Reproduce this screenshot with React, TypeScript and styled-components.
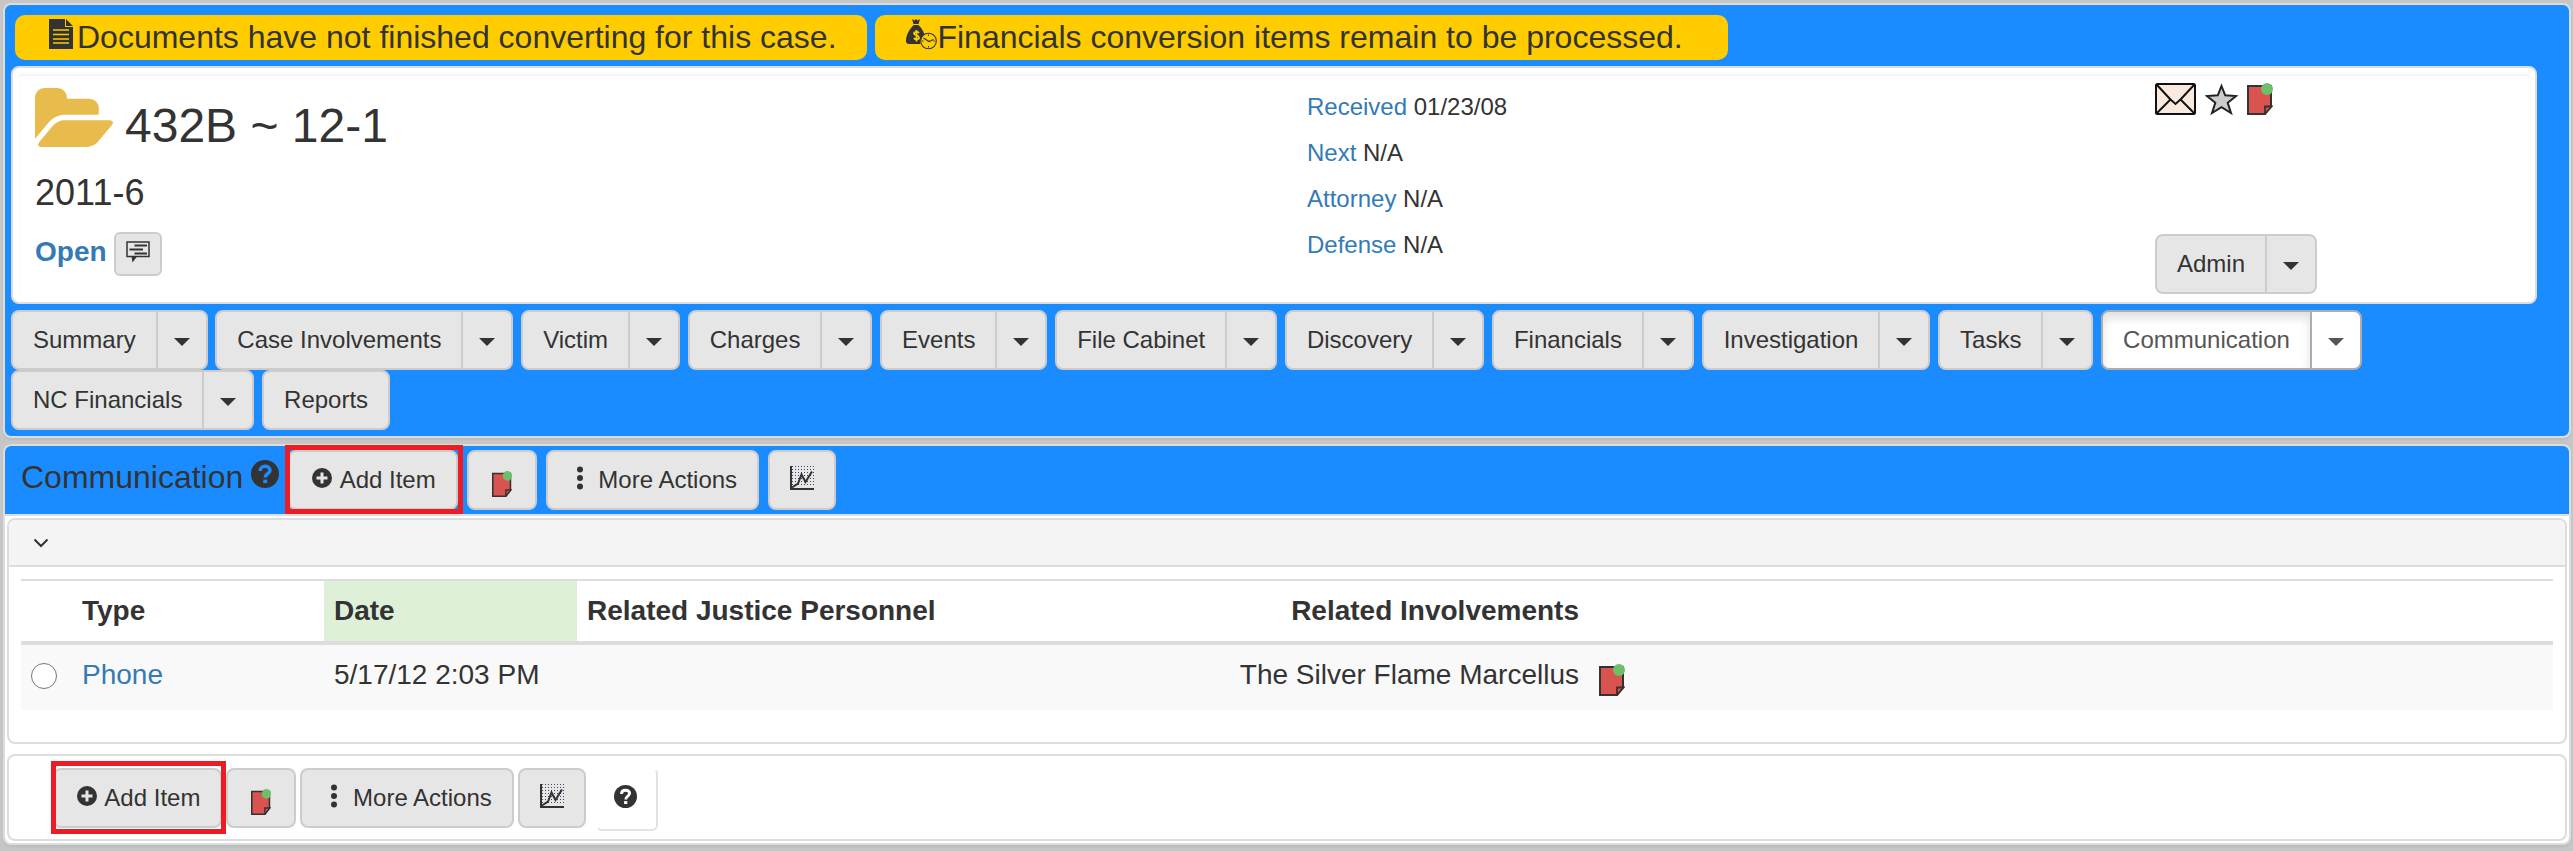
import React from "react";
import styled, { createGlobalStyle, css } from "styled-components";

const GlobalStyle = createGlobalStyle`
  *, *::before, *::after { box-sizing: border-box; }
  body {
    margin: 0;
    background: #c6c6c6;
    color: #333;
    font-family: Arial, "Liberation Sans", sans-serif;
    font-size: 24px;
  }
  button { font: inherit; color: inherit; cursor: pointer; margin: 0; }
  a { color: #337ab7; text-decoration: none; }
  svg { flex: none; }
`;

/* ---------- icons ---------- */

const InlineSvg = styled.svg`
  vertical-align: -2px;
`;

const FileIcon = () => (
  <InlineSvg width="32" height="32" viewBox="0 0 32 32" aria-hidden="true">
    <path fill="#333" d="M4 1h16v8h8v22H4zM21 1l7 7h-7z" />
    <path stroke="#fc0" strokeWidth="1.5" d="M8 12h16M8 16.5h16M8 21h16M8 25h16" />
  </InlineSvg>
);

const MoneyBagIcon = () => (
  <InlineSvg width="32" height="32" viewBox="0 0 32 32" aria-hidden="true">
    <path
      fill="#333"
      d="M7 1l2.500 1.500L11 1l1.500 1.500L15 1l-1.500 5h-5zM8.500 7h5c4 4 6 8 6 11-3 2-5 4-4 8H4c-2 0-3-1-3-3 0-6 3-11 7.500-16z"
    />
    <path
      fill="none"
      stroke="#fc0"
      strokeWidth="1.800"
      d="M14 15c-1-1.500-5-1.500-5 .5s5 1.500 5 4-4 2.500-5 .5M11.500 12v11.500"
    />
    <circle cx="23.500" cy="23" r="7.800" fill="#fc0" stroke="#333" strokeWidth="1.100" />
    <path fill="none" stroke="#333" strokeWidth="1.200" d="M18.500 20l5.500 3.500 4.500-2" />
    <path stroke="#333" strokeWidth="1" d="M23.500 16.500v1.500M23.500 28v1.500M17 23h1.500M28.500 23H30" />
  </InlineSvg>
);

const FolderOpenIcon = () => (
  <svg width="78" height="59" viewBox="64 128 1879 1408" preserveAspectRatio="none" aria-hidden="true">
    <path
      fill="#e8bb4d"
      d="M1943 952q0 31-31 66l-336 396q-43 51-120.500 86.500t-143.500 35.500h-1088q-34 0-60.500-13t-26.500-43q0-31 31-66l336-396q43-51 120.500-86.500t143.500-35.500h1088q34 0 60.500 13t26.500 43zm-343-344v160h-832q-94 0-197 47.500t-164 119.500l-337 396-5 6q0-4-.5-12.500t-.5-12.500v-960q0-92 66-158t158-66h320q92 0 158 66t66 158v32h544q92 0 158 66t66 158z"
    />
  </svg>
);

const CommentIcon = () => (
  <svg width="24" height="22" viewBox="0 0 24 22" aria-hidden="true">
    <path fill="none" stroke="#333" strokeWidth="1.500" d="M1 1h22v14.500H1z" />
    <path stroke="#333" strokeWidth="1.800" d="M8.500 4.500H21M3.500 8.500H17M8.500 12.500H21" />
    <path fill="#333" d="M5.500 15.500h5.500l-4.500 6z" />
  </svg>
);

const EnvelopeIcon = () => (
  <svg width="41" height="32" viewBox="0 0 41 32" aria-hidden="true">
    <rect x="1" y="1" width="39" height="30" rx="1.500" fill="#fae9de" stroke="#111" strokeWidth="2" />
    <path
      fill="none"
      stroke="#111"
      strokeWidth="2"
      d="M2 2l13.500 14.500L2 30M39 2L25.500 16.500 39 30M15.500 16.500l5 4.500 5-4.500"
    />
  </svg>
);

const StarIcon = () => (
  <svg width="33" height="32" viewBox="0 0 33 32" aria-hidden="true">
    <path
      fill="#ccc"
      stroke="#222"
      strokeWidth="2"
      d="M16.500 3l3.700 9.300 10.800.7-8.300 6.800 3.300 10.200-9.500-5.800L7 30l3.300-10.200L2 13l10.800-.7z"
    />
  </svg>
);

const NoteIcon = ({ width = 26, height = 32 }: { width?: number; height?: number }) => (
  <svg width={width} height={height} viewBox="0 0 26 32" preserveAspectRatio="none" aria-hidden="true">
    <path fill="#d9534f" stroke="#333" strokeWidth="2" d="M1 3h23v20l-6 8H1z" />
    <path fill="#d9534f" stroke="#333" strokeWidth="1.800" d="M24.500 23.500H18V31z" />
    <circle cx="20" cy="6" r="6" fill="#6fbf6a" />
  </svg>
);

const PlusIcon = () => (
  <InlineSvg width="24" height="24" viewBox="0 0 24 24" aria-hidden="true">
    <circle cx="12" cy="12" r="10" fill="#333" />
    <path stroke="#e6e6e6" strokeWidth="3" d="M12 6.500v11M6.500 12h11" />
  </InlineSvg>
);

const QuestionIcon = ({ size, knock }: { size: number; knock: string }) => (
  <svg width={size} height={size} viewBox="0 0 24 24" aria-hidden="true">
    <circle cx="12" cy="12" r="12" fill="#333" />
    <path
      fill="none"
      stroke={knock}
      strokeWidth="3"
      d="M7.800 9.500c0-5.500 8.500-5 8.500-.8 0 3-4 2.800-4 6.300"
    />
    <path fill={knock} d="M10.500 16.800h3.400v3h-3.400z" />
  </svg>
);

const DotsIcon = () => (
  <InlineSvg width="24" height="24" viewBox="0 0 24 24" aria-hidden="true">
    <circle cx="12" cy="3.500" r="3" fill="#333" />
    <circle cx="12" cy="12" r="3" fill="#333" />
    <circle cx="12" cy="20.500" r="3" fill="#333" />
  </InlineSvg>
);

const ChartIcon = () => (
  <InlineSvg width="24" height="24" viewBox="0 0 24 24" aria-hidden="true">
    <path
      stroke="#446"
      strokeWidth="1"
      strokeDasharray="1 2"
      d="M2 .5h22M2 3.500h22M2 6.500h22M2 9.500h22M2 12.500h22M2 15.500h22M2 18.500h22"
    />
    <path fill="none" stroke="#333" strokeWidth="2" d="M1 0v23h23" />
    <path fill="none" stroke="#333" strokeWidth="2" d="M2 21.500l6-4 3.500-9 4 7.500L22 5.500" />
  </InlineSvg>
);

const ChevronIcon = () => (
  <svg width="16" height="10" viewBox="0 0 16 10" aria-hidden="true">
    <path fill="none" stroke="#333" strokeWidth="2" d="M1.500 1.500L8 8l6.500-6.500" />
  </svg>
);

/* ---------- panels ---------- */

const Page = styled.div`
  display: flex;
  flex-direction: column;
  gap: 6px;
  padding: 3px 2px 6px 3px;
`;

const Panel = styled.section`
  border: 2px solid #ddd;
  border-radius: 8px;
  background: #fff;
  box-shadow: 0 2px 2px rgba(0, 0, 0, 0.05);
`;

const CasePanel = styled(Panel)`
  display: flex;
  flex-direction: column;
  gap: 6px;
  padding: 10px 32px 6px 6px;
  background: #1a8cff;
`;

const Banners = styled.div`
  display: flex;
  gap: 8px;
  padding-left: 4px;
`;

const Banner = styled.div`
  width: 33.8%;
  padding: 0 30px;
  border-radius: 10px;
  background: #fc0;
  font-size: 32px;
  line-height: 45px;
  white-space: nowrap;
`;

const CaseCard = styled.div`
  padding: 6px;
  border: 2px solid #ddd;
  border-radius: 8px;
  background: #fff;
`;

const CaseGrid = styled.div`
  display: grid;
  grid-template-columns: 6fr 4fr 374px;
  padding: 0 0 0 16px;
  box-shadow: inset 0 2px 2px rgba(0, 0, 0, 0.05);
`;

const Identity = styled.div`
  padding: 14px 0 20px;
`;

const CaseTitle = styled.h1`
  display: flex;
  align-items: flex-end;
  gap: 12px;
  margin: 0;
  font-size: 48px;
  font-weight: 400;
  line-height: 42px;
`;

const CaseNumber = styled.div`
  margin-top: 26px;
  font-size: 36px;
  line-height: 40px;
`;

const StatusRow = styled.div`
  display: flex;
  gap: 7px;
  margin-top: 19px;
  font-size: 28px;
  font-weight: 700;
  line-height: 40px;
`;

const CommentButton = styled.button`
  display: flex;
  align-items: flex-start;
  justify-content: center;
  width: 48px;
  height: 44px;
  padding: 7px 0;
  border: 2px solid #ccc;
  border-radius: 6px;
  background: #e6e6e6;
`;

const Facts = styled.div`
  display: flex;
  flex-direction: column;
  gap: 12px;
  padding-top: 16px;
  line-height: 34px;
`;

const CaseActions = styled.div`
  display: flex;
  flex-direction: column;
  justify-content: space-between;
  align-items: flex-start;
  padding: 9px 0 2px;
`;

const IconRow = styled.div`
  display: flex;
  gap: 9px;
`;

/* ---------- buttons ---------- */

const Button = styled.button<{ $active?: boolean }>`
  display: block;
  height: 60px;
  padding: 10px 20px;
  border: 2px solid #ccc;
  border-radius: 8px;
  background: #e6e6e6;
  line-height: 36px;
  white-space: nowrap;
  ${(p) =>
    p.$active &&
    css`
      border-color: #adadad;
      background: #fff;
      color: #555;
      box-shadow: inset 0 6px 10px rgba(0, 0, 0, 0.125);
    `}
`;

const Split = styled.div`
  display: inline-flex;
  margin-right: 1px;
  vertical-align: top;
  ${Button}:first-child:not(:last-child) {
    border-top-right-radius: 0;
    border-bottom-right-radius: 0;
  }
`;

const Toggle = styled(Button)`
  margin-left: -2px;
  padding: 10px 16px;
  border-top-left-radius: 0;
  border-bottom-left-radius: 0;
  box-shadow: none;
`;

const Caret = styled.span`
  display: inline-block;
  vertical-align: middle;
  border-top: 8px solid currentColor;
  border-left: 8px solid transparent;
  border-right: 8px solid transparent;
`;

const Tabs = styled.nav`
  line-height: 60px;
`;

const NoteButton = styled(Button)`
  display: flex;
  justify-content: center;
  width: 70px;
  padding: 19px 0 0;
`;

const Highlight = styled.div<{ $inset: string }>`
  position: relative;
  &::after {
    content: "";
    position: absolute;
    inset: ${(p) => p.$inset};
    border: 5px solid #ed1c24;
    pointer-events: none;
  }
`;

const HelpButton = styled.button`
  display: flex;
  align-items: flex-start;
  justify-content: center;
  width: 62px;
  height: 63px;
  margin-left: 6px;
  padding: 15px 3px 0 0;
  border: 2px solid transparent;
  border-right-color: #e2e2e2;
  border-bottom-color: #e2e2e2;
  border-radius: 6px;
  background: #fff;
`;

/* ---------- communication section ---------- */

const SectionBar = styled.header`
  display: flex;
  gap: 9px;
  padding: 4px 16px;
  border-bottom: 2px solid #ddd;
  border-radius: 6px 6px 0 0;
  background: #1a8cff;
`;

const SectionTitle = styled.h2`
  display: flex;
  align-items: flex-start;
  gap: 8px;
  margin: 0;
  font-size: 32px;
  font-weight: 400;
  line-height: 54px;
`;

const TitleHelp = styled.button`
  display: flex;
  padding: 10px 0 0;
  border: 0;
  background: none;
`;

const SectionBody = styled.div`
  display: flex;
  flex-direction: column;
  gap: 10px;
  padding: 2px;
`;

const FoldBar = styled.div`
  display: flex;
  align-items: center;
  height: 47px;
  padding: 0 24px;
  border-bottom: 2px solid #ddd;
  border-radius: 6px 6px 0 0;
  background: #f4f4f4;
`;

const FoldButton = styled.button`
  display: flex;
  padding: 0;
  border: 0;
  background: none;
`;

const SubPanel = styled.div`
  border: 2px solid #ddd;
  border-radius: 8px;
  background: #fff;
`;

const TableWrap = styled.div`
  padding: 12px 12px 32px;
`;

const Table = styled.table`
  width: 100%;
  table-layout: fixed;
  border-collapse: separate;
  border-spacing: 0;
  font-size: 28px;
  line-height: 40px;
`;

const Col = styled.col<{ $w?: string }>`
  width: ${(p) => p.$w ?? "auto"};
`;

const Th = styled.th<{ $sorted?: boolean; $right?: boolean }>`
  padding: 10px;
  border-top: 2px solid #ddd;
  border-bottom: 4px solid #ddd;
  background: ${(p) => (p.$sorted ? "#dff0d8" : "transparent")};
  text-align: ${(p) => (p.$right ? "right" : "left")};
  white-space: nowrap;
`;

const Td = styled.td<{ $right?: boolean }>`
  height: 65px;
  padding: 10px;
  background: #f9f9f9;
  text-align: ${(p) => (p.$right ? "right" : "left")};
  vertical-align: top;
  white-space: nowrap;
`;

const NoteCell = styled(Td)`
  padding: 19px 10px 14px;
  line-height: 0;
`;

const Radio = styled.input`
  display: block;
  appearance: none;
  width: 26px;
  height: 26px;
  margin: 8px 0 0;
  border: 1px solid #767676;
  border-radius: 50%;
  background: #fff;
`;

const FooterBar = styled(SubPanel)`
  display: flex;
  align-items: flex-start;
  gap: 4px;
  padding: 12px 44px 8px;
`;

/* ---------- data ---------- */

const tabs: { label: string; menu?: boolean; active?: boolean }[] = [
  { label: "Summary", menu: true },
  { label: "Case Involvements", menu: true },
  { label: "Victim", menu: true },
  { label: "Charges", menu: true },
  { label: "Events", menu: true },
  { label: "File Cabinet", menu: true },
  { label: "Discovery", menu: true },
  { label: "Financials", menu: true },
  { label: "Investigation", menu: true },
  { label: "Tasks", menu: true },
  { label: "Communication", menu: true, active: true },
  { label: "NC Financials", menu: true },
  { label: "Reports" },
];

const facts = [
  ["Received", "01/23/08"],
  ["Next", "N/A"],
  ["Attorney", "N/A"],
  ["Defense", "N/A"],
];

const SplitButton = ({ label, menu, active }: { label: string; menu?: boolean; active?: boolean }) => (
  <Split>
    <Button type="button" $active={active}>
      {label}
    </Button>
    {menu && (
      <Toggle type="button" $active={active} aria-label={`${label} menu`}>
        <Caret />
      </Toggle>
    )}
  </Split>
);

const Actions = ({ inset }: { inset: string }) => (
  <>
    <Highlight $inset={inset}>
      <Button type="button">
        <PlusIcon /> Add Item
      </Button>
    </Highlight>
    <NoteButton type="button" aria-label="Notes">
      <NoteIcon width={20} height={26} />
    </NoteButton>
    <Button type="button">
      <DotsIcon /> More Actions
    </Button>
    <Button type="button" aria-label="Chart">
      <ChartIcon />
    </Button>
  </>
);

export default function App() {
  return (
    <>
      <GlobalStyle />
      <Page>
        <CasePanel>
          <Banners>
            <Banner>
              <FileIcon />
              Documents have not finished converting for this case.
            </Banner>
            <Banner>
              <MoneyBagIcon />
              Financials conversion items remain to be processed.
            </Banner>
          </Banners>
          <CaseCard>
            <CaseGrid>
              <Identity>
                <CaseTitle>
                  <FolderOpenIcon />
                  432B ~ 12-1
                </CaseTitle>
                <CaseNumber>2011-6</CaseNumber>
                <StatusRow>
                  <a href="#status">Open</a>
                  <CommentButton type="button" aria-label="Status comments">
                    <CommentIcon />
                  </CommentButton>
                </StatusRow>
              </Identity>
              <Facts>
                {facts.map(([name, value]) => (
                  <div key={name}>
                    <a href={`#${name.toLowerCase()}`}>{name}</a> {value}
                  </div>
                ))}
              </Facts>
              <CaseActions>
                <IconRow>
                  <EnvelopeIcon />
                  <StarIcon />
                  <NoteIcon />
                </IconRow>
                <SplitButton label="Admin" menu />
              </CaseActions>
            </CaseGrid>
          </CaseCard>
          <Tabs>
            {tabs.map((tab) => (
              <React.Fragment key={tab.label}>
                <SplitButton {...tab} />{" "}
              </React.Fragment>
            ))}
          </Tabs>
        </CasePanel>

        <Panel>
          <SectionBar>
            <SectionTitle>
              Communication
              <TitleHelp type="button" aria-label="Help">
                <QuestionIcon size={28} knock="#1a8cff" />
              </TitleHelp>
            </SectionTitle>
            <Actions inset="-5px -5px -4px -3px" />
          </SectionBar>
          <SectionBody>
            <SubPanel>
              <FoldBar>
                <FoldButton type="button" aria-label="Collapse list">
                  <ChevronIcon />
                </FoldButton>
              </FoldBar>
              <TableWrap>
                <Table>
                  <colgroup>
                    <Col $w="51px" />
                    <Col $w="252px" />
                    <Col $w="253px" />
                    <Col $w="25%" />
                    <Col $w="379px" />
                    <Col />
                  </colgroup>
                  <thead>
                    <tr>
                      <Th />
                      <Th>Type</Th>
                      <Th $sorted>Date</Th>
                      <Th>Related Justice Personnel</Th>
                      <Th $right>Related Involvements</Th>
                      <Th />
                    </tr>
                  </thead>
                  <tbody>
                    <tr>
                      <Td>
                        <Radio type="radio" name="item" aria-label="Select Phone" />
                      </Td>
                      <Td>
                        <a href="#phone">Phone</a>
                      </Td>
                      <Td>5/17/12 2:03 PM</Td>
                      <Td />
                      <Td $right>The Silver Flame Marcellus</Td>
                      <NoteCell>
                        <NoteIcon />
                      </NoteCell>
                    </tr>
                  </tbody>
                </Table>
              </TableWrap>
            </SubPanel>
            <FooterBar>
              <Actions inset="-7px -4px -6px -2px" />
              <HelpButton type="button" aria-label="Help">
                <QuestionIcon size={23} knock="#fff" />
              </HelpButton>
            </FooterBar>
          </SectionBody>
        </Panel>
      </Page>
    </>
  );
}
